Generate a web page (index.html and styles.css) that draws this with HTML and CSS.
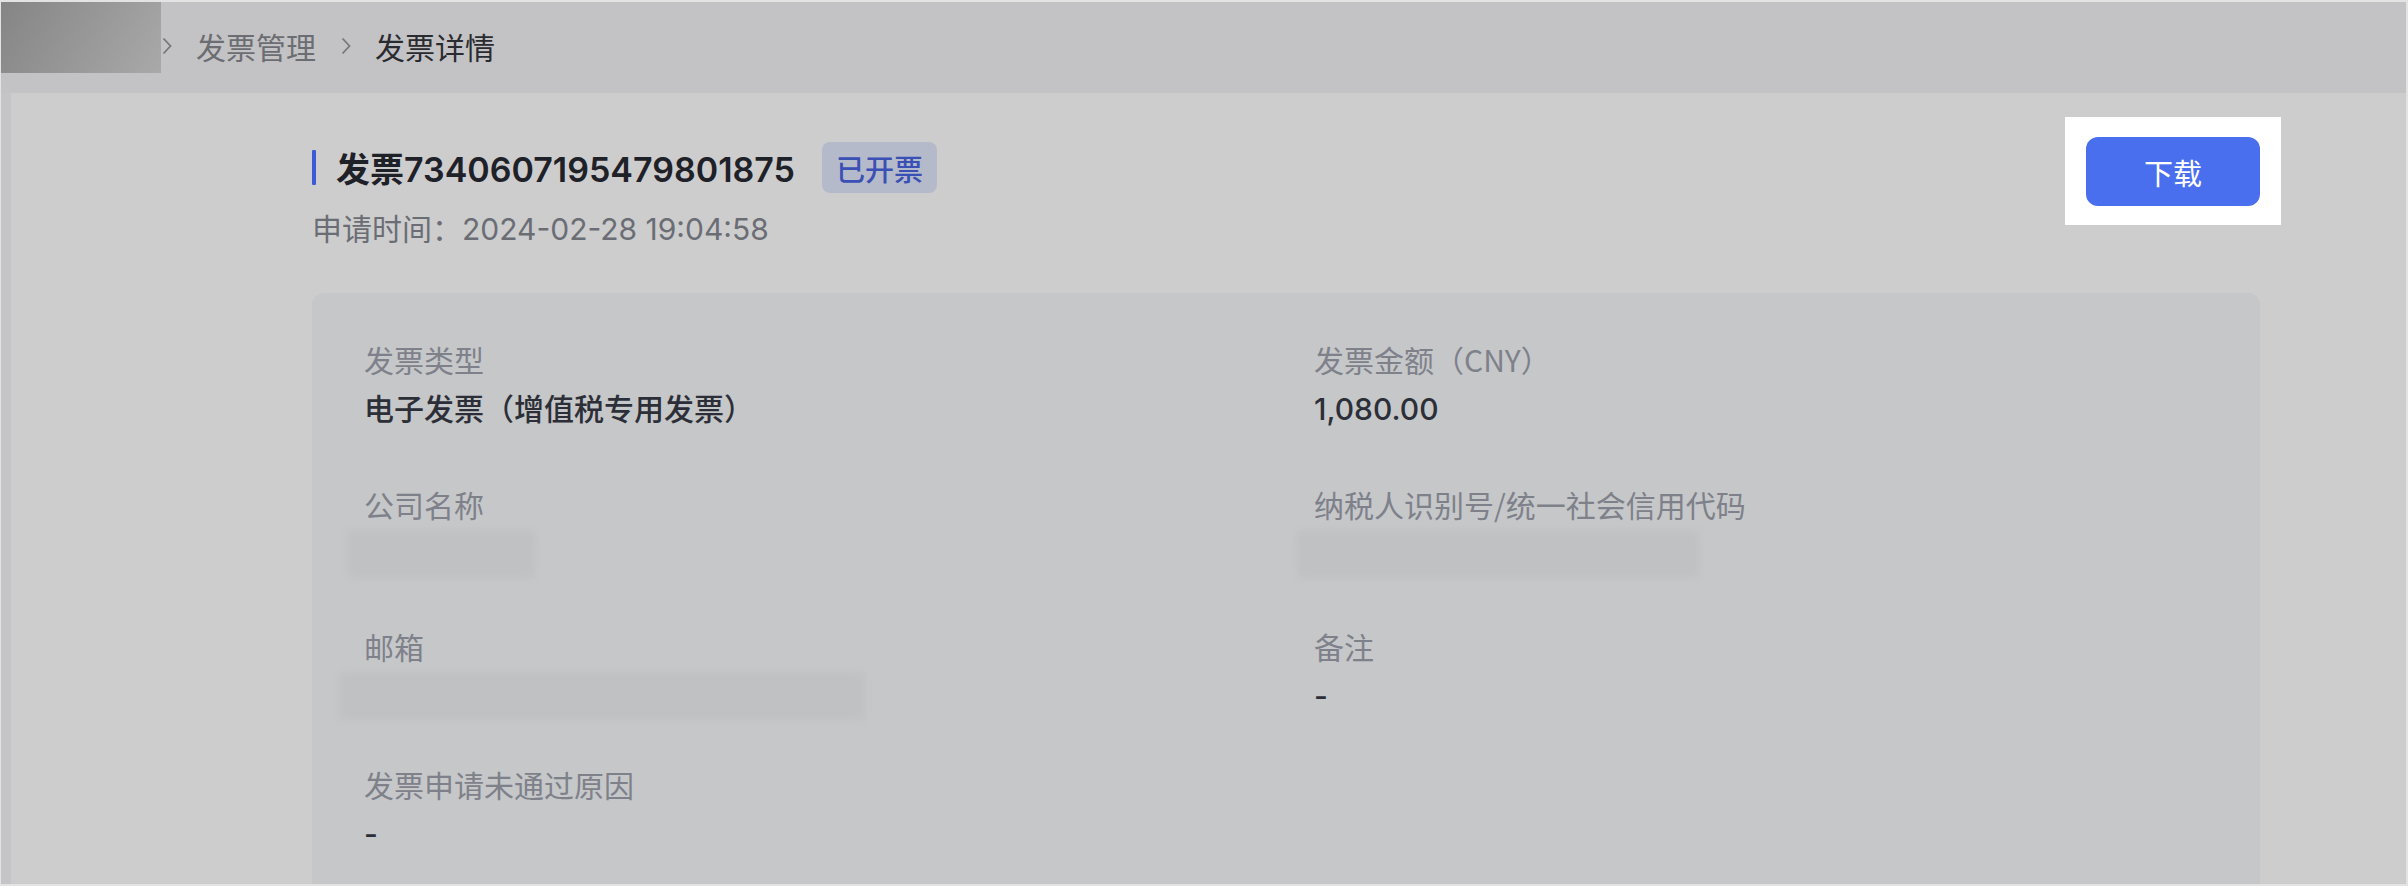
FILE: index.html
```html
<!DOCTYPE html>
<html lang="zh-CN">
<head>
<meta charset="utf-8">
<title>发票详情</title>
<link rel="stylesheet" href="styles.css">
</head>
<body>
<div class="frame">
  <header class="topbar">
    <div class="mosaic"></div>
    <nav class="crumbs">
      <svg class="chev" viewBox="0 0 10 18" width="10" height="18"><polyline points="1.5,1.5 8.5,9 1.5,16.5" fill="none" stroke="currentColor" stroke-width="1.8"/></svg>
      <span class="crumb">发票管理</span>
      <svg class="chev" viewBox="0 0 10 18" width="10" height="18"><polyline points="1.5,1.5 8.5,9 1.5,16.5" fill="none" stroke="currentColor" stroke-width="1.8"/></svg>
      <span class="crumb current">发票详情</span>
    </nav>
  </header>
  <main class="main">
    <div class="container">
      <div class="head">
        <div class="head-left">
          <div class="title-row">
            <span class="bar"></span>
            <h1 class="title">发票7340607195479801875</h1>
            <span class="tag">已开票</span>
          </div>
          <div class="sub">申请时间：2024-02-28 19:04:58</div>
        </div>
        <div class="btn-wrap">
          <button class="btn">下载</button>
        </div>
      </div>
      <section class="card">
        <div class="item">
          <div class="label">发票类型</div>
          <div class="value">电子发票（增值税专用发票）</div>
        </div>
        <div class="item">
          <div class="label">发票金额（CNY）</div>
          <div class="value">1,080.00</div>
        </div>
        <div class="item">
          <div class="label">公司名称</div>
          <div class="value"><span class="blur blur-company"></span></div>
        </div>
        <div class="item">
          <div class="label">纳税人识别号/统一社会信用代码</div>
          <div class="value"><span class="blur blur-tax"></span></div>
        </div>
        <div class="item">
          <div class="label">邮箱</div>
          <div class="value"><span class="blur blur-mail"></span></div>
        </div>
        <div class="item">
          <div class="label">备注</div>
          <div class="value">-</div>
        </div>
        <div class="item last">
          <div class="label">发票申请未通过原因</div>
          <div class="value">-</div>
        </div>
      </section>
    </div>
  </main>
</div>
</body>
</html>
```
FILE: styles.css
```css
* { box-sizing: border-box; }
html, body { margin: 0; padding: 0; }
body {
  width: 2408px;
  height: 886px;
  overflow: hidden;
  background: #e3e3e3;
  font-family: "Inter", "Noto Sans CJK SC", sans-serif;
}
.frame {
  margin: 2px 2px 0 1px;
  height: 882px;
  display: flex;
  flex-direction: column;
  overflow: hidden;
  background: #cdcdcd;
}
.topbar {
  height: 91px;
  flex: none;
  background: #c3c3c5;
  display: flex;
  align-items: flex-start;
}
.mosaic {
  width: 160px;
  height: 71px;
  background: linear-gradient(120deg, #858585 0%, #959595 45%, #a9a9a9 100%);
}
.crumbs {
  display: flex;
  align-items: center;
  height: 88px;
  font-family: "Noto Sans CJK SC", sans-serif;
  font-size: 30px;
}
.chev { color: #77787c; margin: 0 24px 0 1px; }
.crumb { color: #6c6d72; margin-right: 24px; }
.crumb.current { color: #2a2b30; }
.main {
  flex: 1;
  border-left: 10px solid #c5c5c7;
  padding: 49px 0 0 301px;
  overflow: hidden;
}
.container { width: 1948px; }
.head {
  display: flex;
  justify-content: space-between;
  align-items: flex-start;
}
.title-row {
  display: flex;
  align-items: center;
  height: 51px;
}
.bar {
  width: 4px;
  height: 35px;
  background: #3d5bd6;
  border-radius: 1px;
  margin-right: 20px;
}
.title {
  margin: 0;
  font-size: 34px;
  font-weight: 600;
  color: #1f2129;
}
.tag {
  margin-left: 27px;
  height: 51px;
  padding: 0 14px;
  display: flex;
  align-items: center;
  background: #b5bacb;
  color: #3a50b4;
  border-radius: 8px;
  font-family: "Noto Sans CJK SC", sans-serif;
  font-size: 29px;
  font-weight: 500;
}
.sub {
  margin-top: 16px;
  line-height: 40px;
  font-size: 30px;
  color: #6b6d75;
}
.btn-wrap {
  margin-top: -25px;
  margin-right: -21px;
  background: #ffffff;
  padding: 20px 21px 19px 21px;
}
.btn {
  width: 174px;
  height: 69px;
  border: 0;
  border-radius: 12px;
  background: #4a6fee;
  color: #ffffff;
  font-family: "Noto Sans CJK SC", sans-serif;
  font-size: 29px;
  display: block;
}
.card {
  margin-top: 44px;
  background: #c6c7c9;
  border-radius: 12px;
  padding: 45px 52px 60px 52px;
  display: grid;
  grid-template-columns: 1fr 1fr;
  column-gap: 56px;
  row-gap: 53px;
}
.label {
  line-height: 42px;
  font-size: 30px;
  color: #7e818a;
  font-family: "Noto Sans CJK SC", sans-serif;
}
.value {
  margin-top: 8px;
  line-height: 42px;
  height: 42px;
  font-size: 30px;
  font-weight: 500;
  color: #2c2f37;
}
.item.last { margin-top: -7px; }
.blur {
  display: block;
  height: 48px;
  margin-top: -3px;
  background: #c0c1c3;
  border-radius: 6px;
  filter: blur(3px);
}
.blur-company { width: 188px; margin-left: -17px; }
.blur-tax { width: 402px; margin-left: -17px; }
.blur-mail { width: 526px; margin-left: -25px; }
```
